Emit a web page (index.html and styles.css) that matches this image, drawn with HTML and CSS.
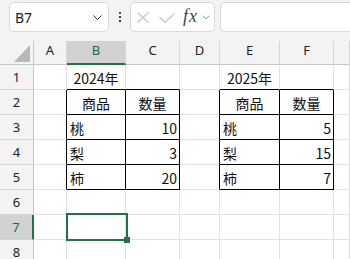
FILE: index.html
```html
<!DOCTYPE html>
<html lang="ja">
<head>
  <meta charset="UTF-8" />
  <meta name="viewport" content="width=device-width, initial-scale=1.0"/>
  <title>Sheet</title>
  <link rel="stylesheet" href="styles.css">
</head>
<body>
  <div class="toolbar">
    <div class="name-box">
      <span class="name">B7</span>
      <svg class="chevron" width="9" height="5" viewBox="0 0 9 5"><path d="M0.5 0.5 L4.5 4.5 L8.5 0.5" fill="none" stroke="#333" stroke-width="1"/></svg>
    </div>
    <div class="more">
      <span class="dot"></span><span class="dot"></span><span class="dot"></span>
    </div>
    <div class="fx-box">
      <svg class="cancel" width="12" height="11" viewBox="0 0 12 11"><path d="M0.5 0.5 L11.5 10.5 M11.5 0.5 L0.5 10.5" fill="none" stroke="#c4c4c4" stroke-width="1.1"/></svg>
      <svg class="enter" width="16" height="10" viewBox="0 0 16 10"><path d="M0.5 4 L6 9.5 L15.5 0.5" fill="none" stroke="#c4c4c4" stroke-width="1.1"/></svg>
      <span class="fx">fx</span>
      <svg class="chevron small" width="8" height="5" viewBox="0 0 8 5"><path d="M0.5 0.5 L4 4 L7.5 0.5" fill="none" stroke="#9a9a9a" stroke-width="1"/></svg>
    </div>
    <div class="formula-input"></div>
  </div>

  <div class="sheet">
    <!-- header -->
    <div class="corner"><span class="corner-mark"></span></div>
    <div class="col-head">A</div>
    <div class="col-head active">B</div>
    <div class="col-head">C</div>
    <div class="col-head">D</div>
    <div class="col-head">E</div>
    <div class="col-head">F</div>
    <div class="col-head"></div>

    <!-- row 1 -->
    <div class="row-head">1</div>
    <div class="cell"></div>
    <div class="cell center bb">2024年</div>
    <div class="cell bb"></div>
    <div class="cell"></div>
    <div class="cell center bb">2025年</div>
    <div class="cell bb"></div>
    <div class="cell"></div>

    <!-- row 2 -->
    <div class="row-head">2</div>
    <div class="cell br"></div>
    <div class="cell center br bb">商品</div>
    <div class="cell center br bb">数量</div>
    <div class="cell br"></div>
    <div class="cell center br bb">商品</div>
    <div class="cell center br bb">数量</div>
    <div class="cell"></div>

    <!-- row 3 -->
    <div class="row-head">3</div>
    <div class="cell br"></div>
    <div class="cell br bb">桃</div>
    <div class="cell num br bb">10</div>
    <div class="cell br"></div>
    <div class="cell br bb">桃</div>
    <div class="cell num br bb">5</div>
    <div class="cell"></div>

    <!-- row 4 -->
    <div class="row-head">4</div>
    <div class="cell br"></div>
    <div class="cell br bb">梨</div>
    <div class="cell num br bb">3</div>
    <div class="cell br"></div>
    <div class="cell br bb">梨</div>
    <div class="cell num br bb">15</div>
    <div class="cell"></div>

    <!-- row 5 -->
    <div class="row-head">5</div>
    <div class="cell br"></div>
    <div class="cell br bb">柿</div>
    <div class="cell num br bb">20</div>
    <div class="cell br"></div>
    <div class="cell br bb">柿</div>
    <div class="cell num br bb">7</div>
    <div class="cell"></div>

    <!-- row 6 -->
    <div class="row-head">6</div>
    <div class="cell"></div>
    <div class="cell"></div>
    <div class="cell"></div>
    <div class="cell"></div>
    <div class="cell"></div>
    <div class="cell"></div>
    <div class="cell"></div>

    <!-- row 7 -->
    <div class="row-head active">7</div>
    <div class="cell"></div>
    <div class="cell selected"><span class="selection"><span class="handle"></span></span></div>
    <div class="cell"></div>
    <div class="cell"></div>
    <div class="cell"></div>
    <div class="cell"></div>
    <div class="cell"></div>

    <!-- row 8 -->
    <div class="row-head">8</div>
    <div class="cell"></div>
    <div class="cell"></div>
    <div class="cell"></div>
    <div class="cell"></div>
    <div class="cell"></div>
    <div class="cell"></div>
    <div class="cell"></div>
  </div>
</body>
</html>
```

FILE: styles.css
```css
body {
  margin: 0;
  background: #f3f3f3;
  font-family: "Noto Sans", "Noto Sans CJK JP", sans-serif;
  color: #222;
  overflow: hidden;
}
.toolbar {
  display: flex;
  align-items: center;
  height: 41px;
  padding: 0 0 8px 9px;
  box-sizing: border-box;
}
.name-box {
  width: 100px;
  height: 30px;
  box-sizing: border-box;
  background: #fff;
  border: 1px solid #d9d9d9;
  border-radius: 5px;
  display: flex;
  align-items: center;
  justify-content: space-between;
  padding: 2px 6px 0 5px;
}
.name {
  font-size: 14px;
  color: #222;
}
.more {
  width: 21px;
  display: flex;
  flex-direction: column;
  align-items: center;
  gap: 2px;
  padding-top: 1px;
}
.dot {
  width: 2px;
  height: 2px;
  background: #444;
}
.fx-box {
  width: 85px;
  height: 30px;
  box-sizing: border-box;
  background: #fff;
  border: 1px solid #d9d9d9;
  border-radius: 5px;
  display: flex;
  align-items: center;
  padding: 1px 0 0 6px;
}
.cancel {
  margin-right: 10px;
}
.enter {
  margin-top: 1px;
  margin-right: 8px;
}
.fx {
  font-family: "Liberation Serif", serif;
  font-style: italic;
  font-size: 18px;
  letter-spacing: 1px;
  color: #444;
  margin-right: 4px;
  margin-top: -1px;
}
.chevron.small {
  margin-top: 1px;
}
.formula-input {
  flex: 1;
  height: 30px;
  margin-left: 5px;
  box-sizing: border-box;
  background: #fff;
  border: 1px solid #d9d9d9;
  border-right: none;
  border-radius: 5px 0 0 5px;
}

.sheet {
  display: grid;
  grid-template-columns: 34px 33px 59px 54px 40px 60px 54px 1fr;
  grid-template-rows: 24px repeat(8, 25px);
  background: #fff;
}
.sheet > div {
  box-sizing: border-box;
  border-right: 1px solid #e1e1e1;
  border-bottom: 1px solid #e1e1e1;
}
.sheet > .corner {
  background: #f3f3f3;
  border-right: 1px solid #c6c6c6;
  border-bottom: 1px solid #c6c6c6;
  position: relative;
}
.corner-mark {
  position: absolute;
  right: 3px;
  bottom: 2px;
  width: 0;
  height: 0;
  border-left: 16px solid transparent;
  border-bottom: 17px solid #b8b8b8;
}
.sheet > .col-head {
  background: #f3f3f3;
  border-right: 1px solid #d6d6d6;
  border-bottom: 1px solid #c6c6c6;
  font-size: 13px;
  display: flex;
  justify-content: center;
  align-items: center;
  padding-bottom: 6px;
  padding-top: 1px;
}
.sheet > .row-head {
  background: #f3f3f3;
  border-right: 1px solid #c6c6c6;
  border-bottom: 1px solid #d6d6d6;
  font-size: 13px;
  display: flex;
  justify-content: center;
  align-items: center;
}
.sheet > .col-head.active {
  background: #d2d2d2;
  color: #1d6b40;
  border-bottom: 2px solid #217346;
}
.sheet > .row-head.active {
  background: #d2d2d2;
  color: #1d6b40;
  border-right: 2px solid #217346;
}
.cell {
  font-family: "Noto Sans CJK JP", sans-serif;
  font-size: 14px;
  color: #111;
  display: flex;
  align-items: flex-end;
  padding: 0 3px 1px 3px;
  line-height: 20px;
}
.cell.center {
  justify-content: center;
}
.cell.num {
  justify-content: flex-end;
  padding-right: 2px;
}
.sheet > .br {
  border-right-color: #000;
}
.sheet > .bb {
  border-bottom-color: #000;
}
.cell.selected {
  position: relative;
}
.selection {
  position: absolute;
  top: -2px;
  left: -1px;
  width: 62px;
  height: 28px;
  box-sizing: border-box;
  border: 2px solid #217346;
}
.handle {
  position: absolute;
  right: -4px;
  bottom: -4px;
  width: 6px;
  height: 6px;
  background: #217346;
}
```
